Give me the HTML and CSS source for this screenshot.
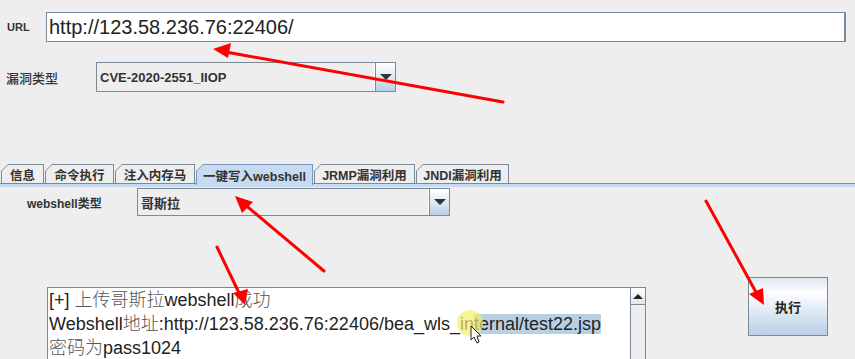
FILE: index.html
```html
<!DOCTYPE html>
<html lang="zh">
<head>
	<meta charset="utf-8">
	<title>WebLogic 漏洞利用</title>
	<link rel="stylesheet" href="styles.css">
</head>
<body>
<div class="window">
	<!-- target -->
	<div class="top">
		<div class="row row-url">
			<span class="lbl lbl-url">URL</span>
			<div class="url-field">http://123.58.236.76:22406/</div>
		</div>
		<div class="row row-type">
			<span class="lbl lbl-type">漏洞类型</span>
			<div class="combo combo-vuln">
				<span class="combo-value">CVE-2020-2551_IIOP</span>
				<span class="combo-arrow"><i class="tri-down"></i></span>
			</div>
		</div>
	</div>

	<!-- tabs -->
	<div class="tabs">
		<div class="tab"><span>信息</span></div>
		<div class="tab"><span>命令执行</span></div>
		<div class="tab"><span>注入内存马</span></div>
		<div class="tab tab-on"><span>一键写入webshell</span></div>
		<div class="tab"><span>JRMP漏洞利用</span></div>
		<div class="tab"><span>JNDI漏洞利用</span></div>
	</div>
	<div class="tab-line"></div>

	<div class="panel">
		<div class="row row-shell">
			<span class="lbl lbl-shell">webshell类型</span>
			<div class="combo combo-shell">
				<span class="combo-value">哥斯拉</span>
				<span class="combo-arrow"><i class="tri-down"></i></span>
			</div>
		</div>
		<div class="row row-out">
			<div class="output">
				<div class="output-text">
					<div>[+] <span class="cn">上传哥斯拉</span>webshell<span class="cn">成功</span></div>
					<div>Webshell<span class="cn">地址</span>:http://123.58.236.76:22406/bea_wls_in<span class="sel">ternal/test22.jsp</span></div>
					<div><span class="cn">密码为</span>pass1024</div>
				</div>
				<div class="vscroll">
					<div class="vscroll-btn"><i class="tri-up"></i></div>
				</div>
			</div>
			<button class="run-btn">执行</button>
		</div>
	</div>

	<!-- red annotations drawn over the screenshot -->
	<svg class="marks" width="855" height="359" viewBox="0 0 855 359">
		<circle cx="470" cy="323" r="13" fill="#f4ee6a" fill-opacity="0.7"/>
		<g stroke="#ff0000" stroke-width="3" stroke-linecap="round">
			<line x1="503" y1="102" x2="226" y2="52"/>
			<line x1="324" y1="271" x2="243" y2="203"/>
			<line x1="217" y1="247" x2="240" y2="295"/>
			<line x1="706" y1="201" x2="757" y2="294"/>
		</g>
		<g fill="#ff0000">
			<polygon points="213,49 231,43 228,58"/>
			<polygon points="235,196 253,202 242,213"/>
			<polygon points="245,305 233,293 248,289"/>
			<polygon points="764,305 749,294 763,288"/>
		</g>
		<path d="M471 326 L471 340 L474 337 L477 343 L479 342 L477 336 L481 336 Z" fill="#fff" stroke="#222" stroke-width="1"/>
	</svg>
</div>
</body>
</html>
```
FILE: styles.css
```css
body {
	margin: 0;
	background: #eeeeee;
	font-family: "Liberation Sans", "Noto Sans CJK SC", sans-serif;
	color: #333333;
}

.window {
	position: relative;
	width: 855px;
	height: 359px;
	overflow: hidden;
}

.row {
	display: flex;
	align-items: center;
}

.lbl {
	font-size: 12px;
	font-weight: bold;
	color: #333333;
}

.top {
	padding: 12px 0 0 6px;
}

.row-url {
	height: 30px;
}

.lbl-url {
	width: 40px;
	font-size: 11px;
	padding-left: 1px;
	box-sizing: border-box;
}

.url-field {
	width: 800px;
	height: 30px;
	box-sizing: border-box;
	border: 1px solid #7a8a99;
	border-right-width: 2px;
	background: #ffffff;
	font-size: 20px;
	line-height: 28px;
	padding-left: 2px;
	color: #222222;
}

.row-type {
	margin-top: 20px;
	height: 30px;
}

.lbl-type {
	width: 90px;
	font-size: 13px;
	font-weight: 500;
}

/* combo box */
.combo {
	display: flex;
	box-sizing: border-box;
	border: 1px solid #7a8a99;
	background: #eeeeee;
}

.combo-vuln {
	width: 300px;
	height: 30px;
}

.combo-value {
	flex: 1;
	display: flex;
	align-items: center;
	padding-left: 3px;
	font-size: 13px;
	font-weight: bold;
	color: #333333;
	border-right: 1px solid #ffffff;
}

.combo-arrow {
	width: 19px;
	display: flex;
	align-items: center;
	justify-content: center;
	border-left: 1px solid #7a8a99;
	background: linear-gradient(to bottom, #ffffff 0%, #e6eef7 40%, #b8cfe5 100%);
}

.tri-down {
	width: 0;
	height: 0;
	border-left: 6px solid transparent;
	border-right: 6px solid transparent;
	border-top: 6px solid #333333;
}

/* tabs */
.tabs {
	display: flex;
	margin-top: 72px;
	padding-left: 1px;
	height: 19px;
}

.tab {
	height: 19px;
	padding: 1px 1px 0 1px;
	background: #7a8a99;
	clip-path: polygon(7px 0, 100% 0, 100% 100%, 0 100%, 0 7px);
	margin-right: 1px;
}

.tab span {
	display: flex;
	align-items: center;
	justify-content: center;
	height: 18px;
	background: #eeeeee;
	clip-path: polygon(6px 0, 100% 0, 100% 100%, 0 100%, 0 6px);
	font-size: 12.5px;
	font-weight: bold;
	color: #333333;
}

.tab:nth-child(1) { width: 41px; }
.tab:nth-child(2) { width: 67px; }
.tab:nth-child(3) { width: 78px; }
.tab:nth-child(4) { width: 115px; }
.tab:nth-child(5) { width: 99px; }
.tab:nth-child(6) { width: 91px; }

.tab.tab-on {
	background: #7a96c0;
	height: 20px;
	position: relative;
	z-index: 1;
}

.tab.tab-on span {
	height: 20px;
	background: #c6daf0;
}

.tab-line {
	height: 3px;
	border-top: 1px solid #7a8aa9;
	background: #c6daf0;
}

/* panel */
.row-shell {
	margin-top: 1px;
	height: 28px;
}

.lbl-shell {
	width: 110px;
	padding-left: 27px;
}

.combo-shell {
	width: 313px;
	height: 28px;
}

.row-out {
	margin-top: 61px;
	align-items: flex-start;
}

.output {
	display: flex;
	margin: 10px 0 0 47px;
	width: 599px;
	height: 120px;
	box-sizing: border-box;
	border: 1px solid #7a8a99;
	background: #ffffff;
}

.output-text {
	flex: 1;
	padding: 0 0 0 1px;
	font-size: 18px;
	line-height: 24px;
	color: #222222;
	white-space: nowrap;
}

.cn {
	font-weight: 300;
	color: #555555;
}

.sel {
	background: #b8cfe5;
}

.vscroll {
	width: 14px;
	border-left: 1px solid #7a8a99;
	background: #eeeeee;
}

.vscroll-btn {
	height: 16px;
	display: flex;
	align-items: center;
	justify-content: center;
	border-bottom: 1px solid #7a8a99;
	background: linear-gradient(to bottom, #ffffff, #dde8f3);
}

.tri-up {
	width: 0;
	height: 0;
	border-left: 5px solid transparent;
	border-right: 5px solid transparent;
	border-bottom: 5px solid #222222;
}

.run-btn {
	margin-left: 102px;
	width: 80px;
	height: 59px;
	border: 1px solid #7a8a99;
	background: linear-gradient(to bottom, #dde8f3 0%, #ffffff 25%, #b8cfe5 100%);
	font-family: "Liberation Sans", "Noto Sans CJK SC", sans-serif;
	font-size: 13px;
	font-weight: bold;
	color: #222222;
	padding: 0;
}

.marks {
	position: absolute;
	top: 0;
	left: 0;
	pointer-events: none;
}
```
